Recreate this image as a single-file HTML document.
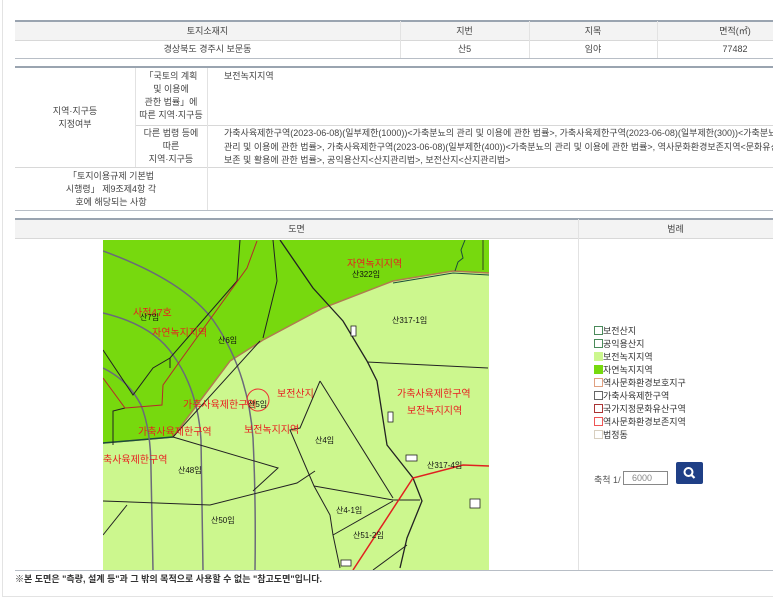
<!DOCTYPE html>
<html><head><meta charset="utf-8"><style>
*{margin:0;padding:0;box-sizing:border-box}
body{width:773px;height:600px;overflow:hidden;background:#fff;font-family:"Liberation Sans","Noto Sans CJK KR",sans-serif;font-size:9px;color:#444;position:relative}
.frame{position:absolute;left:2px;top:0;width:780px;height:597px;border:1px solid #e3e3e3;border-top:none;border-right:none}
.abs{position:absolute}
.hl{position:absolute;height:1px;background:#d8d8d8;left:15px;right:0}
.vl{position:absolute;width:1px;background:#e2e2e2}
.c{position:absolute;text-align:center;line-height:13px}
</style></head><body>
<div class="frame"></div>
<div class="abs" style="left:15px;top:21px;right:0;height:19px;background:#f3f3f3"></div>
<div class="hl" style="top:20px;height:2px;background:#9aa4b0"></div>
<div class="hl" style="top:40px"></div>
<div class="hl" style="top:58px;background:#b8bec6"></div>
<div class="vl" style="left:400px;top:21px;height:37px"></div>
<div class="vl" style="left:529px;top:21px;height:37px"></div>
<div class="vl" style="left:657px;top:21px;height:37px"></div>
<div class="c" style="left:15px;width:385px;top:25px">토지소재지</div>
<div class="c" style="left:400px;width:129px;top:25px">지번</div>
<div class="c" style="left:529px;width:128px;top:25px">지목</div>
<div class="c" style="left:657px;width:116px;top:25px;padding-left:40px">면적(㎡)</div>
<div class="c" style="left:15px;width:385px;top:43px">경상북도 경주시 보문동</div>
<div class="c" style="left:400px;width:129px;top:43px">산5</div>
<div class="c" style="left:529px;width:128px;top:43px">임야</div>
<div class="c" style="left:657px;width:116px;top:43px;padding-left:40px">77482</div>
<div class="hl" style="top:66px;height:2px;background:#9aa4b0"></div>
<div class="hl" style="top:125px;left:135px"></div>
<div class="hl" style="top:167px"></div>
<div class="hl" style="top:210px;background:#b8bec6"></div>
<div class="vl" style="left:135px;top:68px;height:99px"></div>
<div class="vl" style="left:207px;top:68px;height:142px"></div>
<div class="c" style="left:15px;width:120px;top:105px">지역·지구등<br>지정여부</div>
<div class="c" style="left:135px;width:72px;top:70px">「국토의 계획<br>및 이용에<br>관한 법률」에<br>따른 지역·지구등</div>
<div class="c" style="left:135px;width:72px;top:127px">다른 법령 등에<br>따른<br>지역·지구등</div>
<div class="c" style="left:15px;width:192px;top:170px">「토지이용규제 기본법<br>시행령」 제9조제4항 각<br>호에 해당되는 사항</div>
<div class="abs" style="left:224px;top:70px;line-height:13px">보전녹지지역</div>
<div class="abs" style="left:224px;top:127px;line-height:13.5px;white-space:nowrap;width:549px;overflow:hidden">가축사육제한구역(2023-06-08)(일부제한(1000))&lt;가축분뇨의 관리 및 이용에 관한 법률&gt;, 가축사육제한구역(2023-06-08)(일부제한(300))&lt;가축분뇨의<br>관리 및 이용에 관한 법률&gt;, 가축사육제한구역(2023-06-08)(일부제한(400))&lt;가축분뇨의 관리 및 이용에 관한 법률&gt;, 역사문화환경보존지역&lt;문화유산의<br>보존 및 활용에 관한 법률&gt;, 공익용산지&lt;산지관리법&gt;, 보전산지&lt;산지관리법&gt;</div>
<div class="abs" style="left:15px;top:219px;right:0;height:19px;background:#f3f3f3"></div>
<div class="hl" style="top:218px;height:2px;background:#9aa4b0"></div>
<div class="hl" style="top:238px"></div>
<div class="hl" style="top:570px;background:#b8bec6"></div>
<div class="vl" style="left:578px;top:219px;height:351px"></div>
<div class="c" style="left:15px;width:563px;top:223px">도면</div>
<div class="c" style="left:578px;width:195px;top:223px">범례</div>
<svg class="abs" style="left:103px;top:240px" width="386" height="330" viewBox="0 0 386 330" font-family="Liberation Sans,Noto Sans CJK KR,sans-serif">
<rect width="386" height="330" fill="#ccf78e"/>
<path d="M0 0H386V33L350 31L290 41L220 68L160 100L127 121L70 197L0 203Z" fill="#77d90e"/>
<path d="M0 203L70 197L127 121L160 100L220 68L290 41L350 31L386 33" fill="none" stroke="#b07a50" stroke-width="1.5"/>
<path d="M0 203L70 197" stroke="#1a4d3a" stroke-width="1.5" fill="none"/>
<path d="M290 41L350 31L386 33" stroke="#1a4d3a" stroke-width="1" fill="none" transform="translate(0,2)"/>
<path d="M352 31L355 22L360 18L358 10L362 0" stroke="#1a4d3a" stroke-width="1" fill="none"/>
<path d="M380 0V30" stroke="#222" stroke-width="0.8"/>
<g fill="none" stroke="#6a6a7a" stroke-width="1.5">
<path d="M0 11Q80 40 110 80Q145 130 150 198Q153 260 152 330"/>
<path d="M0 73Q50 85 70 115Q95 150 98 200L100 330"/>
<path d="M0 128Q25 140 38 165Q48 190 48 230L50 330"/>
</g>
<g fill="none" stroke="#222" stroke-width="1">
<path d="M177 0L210 48L240 81L264 121L274 141L284 205L310 238L319 261L304 298L297 328" stroke-width="1.3"/>
<path d="M264 122L385 128"/>
<path d="M170 0L174 41L160 98"/>
<path d="M137 0L134 41L67 118L50 128L30 155L0 110"/>
<path d="M67 118L67 128"/>
<path d="M22 168L10 171L10 205"/>
<path d="M157 101L70 197"/>
<path d="M70 197L175 228L150 251"/>
<path d="M0 261L107 265L194 243L212 231"/>
<path d="M217 141L197 188L187 190L211 246L227 275L230 295L237 328"/>
<path d="M217 141L290 258"/>
<path d="M211 246L290 260L317 260"/>
<path d="M230 295L290 261"/>
<path d="M0 295L24 265"/>
<path d="M270 330L304 305"/>
</g>
<path d="M154 1L144 28L77 121L60 145L59 165L22 168L0 138" fill="none" stroke="#b52a2a" stroke-width="1"/>
<path d="M250 330L310 238L360 225L386 226" fill="none" stroke="#e02020" stroke-width="1.5"/>
<g fill="#fff" stroke="#222" stroke-width="0.8">
<rect x="248" y="86" width="5" height="10"/><rect x="285" y="172" width="5" height="10"/><rect x="303" y="215" width="11" height="6"/><rect x="367" y="259" width="10" height="9"/><rect x="238" y="320" width="10" height="6"/>
</g>
<circle cx="155" cy="160" r="11" fill="none" stroke="#e33" stroke-width="1"/>
<g font-size="10" fill="#e82020">
<text x="244" y="27">자연녹지지역</text>
<text x="30" y="76">사적47호</text>
<text x="49" y="96">자연녹지지역</text>
<text x="80" y="168">가축사육제한구역</text>
<text x="174" y="157">보전산지</text>
<text x="141" y="193">보전녹지지역</text>
<text x="35" y="195">가축사육제한구역</text>
<text x="0" y="223">축사육제한구역</text>
<text x="294" y="157">가축사육제한구역</text>
<text x="304" y="174">보전녹지지역</text>
</g>
<g font-size="8" fill="#111">
<text x="249" y="37">산322임</text>
<text x="289" y="83">산317-1임</text>
<text x="115" y="103">산6임</text>
<text x="37" y="80">산7임</text>
<text x="145" y="167">산5임</text>
<text x="212" y="203">산4임</text>
<text x="75" y="233">산48임</text>
<text x="324" y="228">산317-4임</text>
<text x="233" y="273">산4-1임</text>
<text x="250" y="298">산51-2임</text>
<text x="108" y="283">산50임</text>
</g>
</svg>
<div class="abs" style="left:594px;top:325px;line-height:13px;font-size:9px;color:#333">
<div><span style="display:inline-block;width:9px;height:9px;border:1px solid #4a8a5a;vertical-align:-1px"></span>보전산지</div>
<div><span style="display:inline-block;width:9px;height:9px;border:1px solid #4a8a5a;vertical-align:-1px"></span>공익용산지</div>
<div><span style="display:inline-block;width:9px;height:9px;background:#ccf78e;vertical-align:-1px"></span>보전녹지지역</div>
<div><span style="display:inline-block;width:9px;height:9px;background:#77d90e;vertical-align:-1px"></span>자연녹지지역</div>
<div><span style="display:inline-block;width:9px;height:9px;border:1px solid #e0a080;vertical-align:-1px"></span>역사문화환경보호지구</div>
<div><span style="display:inline-block;width:9px;height:9px;border:1px solid #666;vertical-align:-1px"></span>가축사육제한구역</div>
<div><span style="display:inline-block;width:9px;height:9px;border:1px solid #a33;vertical-align:-1px"></span>국가지정문화유산구역</div>
<div><span style="display:inline-block;width:9px;height:9px;border:1px solid #e55;vertical-align:-1px"></span>역사문화환경보존지역</div>
<div><span style="display:inline-block;width:9px;height:9px;border:1px solid #d8cfc0;vertical-align:-1px"></span>법정동</div>
</div>
<div class="abs" style="left:594px;top:473px;color:#555">축척 1/</div>
<div class="abs" style="left:623px;top:471px;width:45px;height:14px;border:1px solid #888;color:#888;padding-left:8px;line-height:12px">6000</div>
<div class="abs" style="left:676px;top:462px;width:27px;height:22px;background:#1f3f86;border-radius:2px">
<svg width="27" height="22"><circle cx="12.5" cy="10" r="4" fill="none" stroke="#fff" stroke-width="2"/><path d="M15.5 13L18.5 16" stroke="#fff" stroke-width="2.2"/></svg></div>
<div class="abs" style="left:15px;top:572px;font-size:9px;color:#333;font-weight:bold">※본 도면은 "측량, 설계 등"과 그 밖의 목적으로 사용할 수 없는 "참고도면"입니다.</div>
</body></html>
